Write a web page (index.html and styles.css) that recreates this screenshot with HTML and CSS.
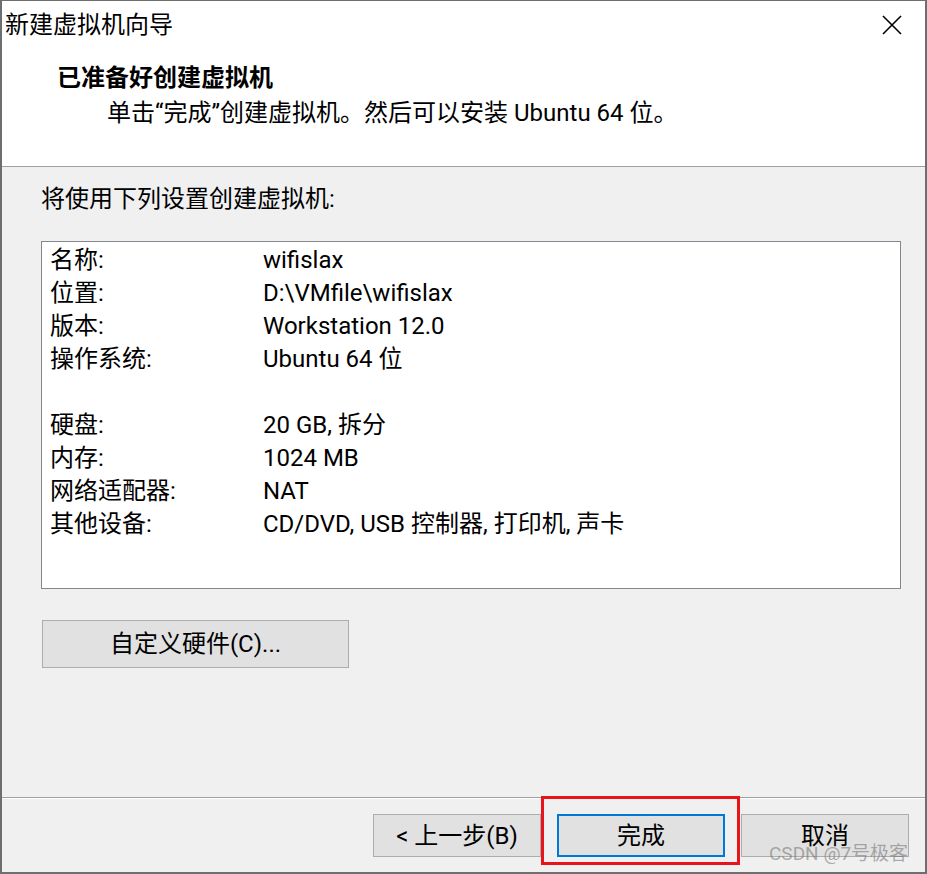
FILE: index.html
```html
<!DOCTYPE html>
<html lang="zh-CN">
<head>
<meta charset="utf-8">
<title>新建虚拟机向导</title>
<link rel="stylesheet" href="styles.css">
</head>
<body>
<div class="window">
  <div class="header">
    <div class="titlebar">
      <span class="title">新建虚拟机向导</span>
      <svg class="close" width="20" height="20" viewBox="0 0 20 20" aria-hidden="true">
        <path d="M1 1 L19 19 M19 1 L1 19" stroke="#000" stroke-width="1.6" fill="none"/>
      </svg>
    </div>
    <div class="heading">已准备好创建虚拟机</div>
    <div class="subtext">单击“完成”创建虚拟机。然后可以安装 Ubuntu 64 位。</div>
  </div>
  <div class="content">
    <div class="intro">将使用下列设置创建虚拟机:</div>
    <div class="listbox">
      <div class="row"><span class="key">名称:</span><span class="val">wifislax</span></div>
      <div class="row"><span class="key">位置:</span><span class="val">D:\VMfile\wifislax</span></div>
      <div class="row"><span class="key">版本:</span><span class="val">Workstation 12.0</span></div>
      <div class="row"><span class="key">操作系统:</span><span class="val">Ubuntu 64 位</span></div>
      <div class="row blank"></div>
      <div class="row"><span class="key">硬盘:</span><span class="val">20 GB, 拆分</span></div>
      <div class="row"><span class="key">内存:</span><span class="val">1024 MB</span></div>
      <div class="row"><span class="key">网络适配器:</span><span class="val">NAT</span></div>
      <div class="row"><span class="key">其他设备:</span><span class="val">CD/DVD, USB 控制器, 打印机, 声卡</span></div>
    </div>
    <button class="btn custom">自定义硬件(C)...</button>
  </div>
  <div class="footer">
    <button class="btn">&lt; 上一步(B)</button>
    <button class="btn primary">完成</button>
    <button class="btn">取消</button>
  </div>
  <div class="highlight"></div>
  <div class="watermark">CSDN @7号极客</div>
</div>
</body>
</html>
```

FILE: styles.css
```css
* {
  box-sizing: border-box;
}

html, body {
  margin: 0;
  padding: 0;
  background: #f0f0f0;
}

body {
  font-family: Roboto, "Noto Sans CJK SC", sans-serif;
  font-size: 24px;
  color: #000;
}

.window {
  position: relative;
  width: 927px;
  height: 874px;
  border: 2px solid #6e6e6e;
  border-top-width: 1px;
  background: #f0f0f0;
  display: flex;
  flex-direction: column;
  overflow: hidden;
}

.header {
  background: #fff;
  height: 166px;
  border-bottom: 1px solid #a0a0a0;
  flex: none;
}

.titlebar {
  height: 48px;
  display: flex;
  align-items: center;
  justify-content: space-between;
  padding: 0 23px 0 3px;
}

.title {
  font-size: 24px;
  line-height: 1;
}

.close {
  display: block;
}

.heading {
  margin: 13px 0 0 55px;
  font-weight: bold;
  line-height: 33px;
}

.subtext {
  margin: 2px 0 0 105px;
  line-height: 33px;
}

.content {
  flex: 1;
  padding: 16px 24px 0 39px;
  display: flex;
  flex-direction: column;
  align-items: flex-start;
}

.intro {
  line-height: 33px;
}

.listbox {
  align-self: stretch;
  margin-top: 25px;
  height: 348px;
  background: #fff;
  border: 1px solid #828790;
  padding: 2px 8px 0 8px;
}

.row {
  display: flex;
  height: 33px;
  line-height: 33px;
  white-space: nowrap;
}

.key {
  width: 213px;
  flex: none;
}

.btn {
  font: inherit;
  color: #000;
  background: #e1e1e1;
  border: 1px solid #adadad;
  border-radius: 0;
  padding: 0;
  margin: 0;
  line-height: 1;
  display: flex;
  align-items: center;
  justify-content: center;
}

.custom {
  margin: 31px 0 0 1px;
  width: 307px;
  height: 48px;
}

.footer {
  flex: none;
  height: 75px;
  border-top: 1px solid #a0a0a0;
  box-shadow: inset 0 1px 0 #ffffff;
  display: flex;
  justify-content: flex-end;
  align-items: flex-start;
  gap: 16px;
  padding: 16px 16px 0 0;
}

.footer .btn {
  width: 168px;
  height: 43px;
}

.footer .primary {
  border: 2px solid #0078d7;
}

.highlight {
  position: absolute;
  left: 539px;
  top: 795px;
  width: 199px;
  height: 69px;
  border: 3px solid #e8141c;
  pointer-events: none;
}

.watermark {
  position: absolute;
  left: 767px;
  top: 841px;
  font-size: 19px;
  line-height: 24px;
  color: rgba(110, 110, 110, 0.55);
  white-space: nowrap;
  pointer-events: none;
}
```
